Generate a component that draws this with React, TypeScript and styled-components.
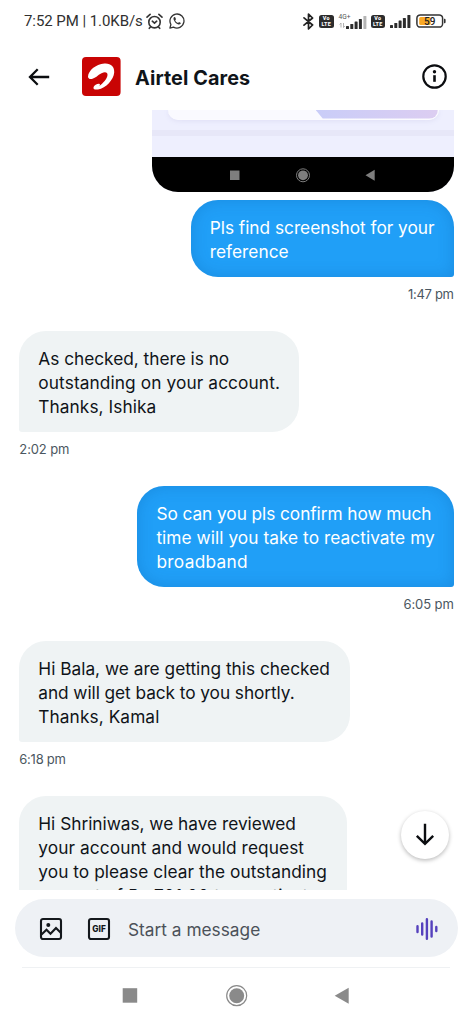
import React from 'react';
import styled, { createGlobalStyle } from 'styled-components';

const GlobalStyle = createGlobalStyle`
  *, *::before, *::after { box-sizing: border-box; }
  body { margin: 0; background: #fff; font-family: Inter, "Liberation Sans", sans-serif; color: #0f1419; }
  svg { display: block; flex: none; }
`;

const Screen = styled.div`
  width: 472px;
  height: 1024px;
  display: flex;
  flex-direction: column;
  background: #fff;
  overflow: hidden;
`;

const StatusBar = styled.div`
  height: 42px;
  flex: none;
  display: flex;
  align-items: center;
  padding: 0 26px 0 24px;
  color: #303030;
`;

const Clock = styled.span`
  font: 400 15px/20px Roboto, sans-serif;
  letter-spacing: -0.06px;
  white-space: nowrap;
  margin-right: 3px;
`;

const WhatsAppIcon = styled.svg`
  margin-left: 6px;
`;

const StatusIcons = styled.div`
  display: flex;
  align-items: center;
  gap: 5px;
  margin-left: auto;
`;

const Volte = styled.span`
  width: 14.5px;
  height: 13px;
  border-radius: 2.5px;
  background: #2c2c2c;
  color: #fff;
  font: 800 5.4px/6.4px Roboto, sans-serif;
  letter-spacing: 0.3px;
  display: flex;
  flex-direction: column;
  align-items: center;
  justify-content: center;
`;

const Network = styled.div`
  display: flex;
  align-items: flex-end;
  margin-right: -1px;
`;

const NetworkType = styled.div`
  width: 7px;
  height: 16px;
  font: 400 6.6px/8px Roboto, sans-serif;
  color: #555;
  white-space: nowrap;
`;

const Header = styled.header`
  height: 68px;
  flex: none;
  display: flex;
  align-items: center;
  padding: 1px 25px 0 28px;
`;

const Avatar = styled.div`
  margin: -1px 0 0 32px;
`;

const Title = styled.h1`
  margin: 2px auto 0 14px;
  font-size: 19.8px;
  line-height: 26px;
  font-weight: 650;
  letter-spacing: 0.1px;
`;

const Conversation = styled.main`
  position: relative;
  height: 779.7px;
  flex: none;
  overflow: hidden;
  display: flex;
  flex-direction: column;
  padding: 0 18.3px 0 19.3px;
`;

const Attachment = styled.div`
  width: 301.7px;
  height: 82px;
  flex: none;
  align-self: flex-end;
  display: flex;
  flex-direction: column;
  border-radius: 0 0 26px 26px;
  overflow: hidden;
  background: #eeeffe;
  margin-bottom: 8.2px;
`;

const AttachmentCard = styled.div`
  height: 9.5px;
  margin: 0 15px 0 16px;
  border: solid #fbfbff;
  border-width: 0 1.5px 1.5px 0;
  border-radius: 0 0 10px 10px;
  background: #fafaff;
  overflow: hidden;
  display: flex;
  justify-content: flex-end;
  box-shadow: 0 1px 5px #dfdff5;
`;

const CardAccent = styled.div`
  width: 122px;
  background: linear-gradient(90deg, #c9cdf8, #dccdf1);
  clip-path: polygon(0 0, 100% 0, 100% 100%, 7px 100%);
`;

const Stripe = styled.div`
  height: 6px;
  margin-top: 10.5px;
  background: #e7e7f8;
`;

const MiniNav = styled.div`
  height: 35.5px;
  margin-top: auto;
  background: #000;
`;

const Message = styled.div<{ $mine?: boolean }>`
  flex: none;
  display: flex;
  flex-direction: column;
  align-items: ${p => (p.$mine ? 'flex-end' : 'flex-start')};
`;

const Bubble = styled.div<{ $mine?: boolean; $width: number }>`
  width: ${p => p.$width}px;
  padding: 16px 0 12.5px 19px;
  font-size: 17.3px;
  line-height: 24px;
  white-space: nowrap;
  color: ${p => (p.$mine ? '#fff' : '#0f1419')};
  background: ${p => (p.$mine ? '#209ff7' : '#eff3f4')};
  border-radius: ${p => (p.$mine ? '27px 27px 3px 27px' : '27px 27px 27px 3px')};
  box-shadow: ${p => (p.$mine ? 'inset 0 0 16px rgba(10, 75, 145, 0.22)' : 'none')};
`;

const Line = styled.div<{ $tracking?: number }>`
  letter-spacing: ${p => p.$tracking ?? 0}px;
`;

const Time = styled.time<{ $tracking?: number }>`
  height: 54.5px;
  padding-top: 9px;
  font-size: 13px;
  line-height: 16px;
  color: #4b5761;
  letter-spacing: ${p => p.$tracking ?? 0}px;
`;

const ScrollButton = styled.button`
  position: absolute;
  right: 23px;
  bottom: 31px;
  width: 48px;
  height: 48px;
  padding: 0;
  border: 0;
  border-radius: 50%;
  background: #fff;
  box-shadow: 0 1.5px 4px rgba(0, 0, 0, 0.28);
  display: grid;
  place-items: center;
`;

const Composer = styled.div`
  height: 58px;
  flex: none;
  margin: 9.8px 14px 0 15px;
  padding: 1px 19px 0 24px;
  border-radius: 29px;
  background: #eef1f5;
  display: flex;
  align-items: center;
`;

const ComposerIcons = styled.div`
  display: flex;
  gap: 24px;
`;

const Placeholder = styled.span`
  margin: 2px auto 0 17px;
  font-size: 17.3px;
  line-height: 24px;
  color: #4b5159;
`;

const Divider = styled.div`
  height: 1px;
  flex: none;
  margin: 9.5px 22px 0;
  background: #eff1f3;
`;

const SystemNav = styled.nav`
  flex: 1;
`;

type Row = { text: string; tracking?: number };
type Entry = { mine?: boolean; width: number; rows: Row[]; time?: string; timeTracking?: number };

const messages: Entry[] = [
  {
    mine: true,
    width: 263,
    rows: [{ text: 'Pls find screenshot for your', tracking: -0.02 }, { text: 'reference', tracking: 0.03 }],
    time: '1:47 pm',
    timeTracking: -0.3,
  },
  {
    width: 280,
    rows: [
      { text: 'As checked, there is no', tracking: -0.02 },
      { text: 'outstanding on your account.', tracking: 0.1 },
      { text: 'Thanks, Ishika', tracking: 0.07 },
    ],
    time: '2:02 pm',
    timeTracking: -0.1,
  },
  {
    mine: true,
    width: 316.3,
    rows: [
      { text: 'So can you pls confirm how much', tracking: -0.07 },
      { text: 'time will you take to reactivate my', tracking: 0.05 },
      { text: 'broadband', tracking: 0.3 },
    ],
    time: '6:05 pm',
    timeTracking: -0.1,
  },
  {
    width: 330.3,
    rows: [
      { text: 'Hi Bala, we are getting this checked' },
      { text: 'and will get back to you shortly.', tracking: -0.07 },
      { text: 'Thanks, Kamal', tracking: 0.08 },
    ],
    time: '6:18 pm',
    timeTracking: -0.25,
  },
  {
    width: 327.3,
    rows: [
      { text: 'Hi Shriniwas, we have reviewed', tracking: -0.02 },
      { text: 'your account and would request', tracking: 0.08 },
      { text: 'you to please clear the outstanding', tracking: 0.05 },
      { text: 'amount of Rs 701.00 to reactivate', tracking: 0.22 },
    ],
  },
];

const Signal = ({ weak }: { weak?: boolean }) => (
  <svg width="21" height="13" viewBox="0 0 21 13" fill="#2c2c2c">
    <rect x="0" y="10" width="3" height="3" rx=".6" />
    <rect x="4.3" y="8" width="3" height="5" rx=".6" />
    <rect x="8.6" y="5.5" width="3" height="7.5" rx=".6" />
    <rect x="12.9" y="3" width="3" height="10" rx=".6" />
    <rect x="17.4" y="0" width="3" height="13" rx=".6" fill={weak ? '#b5b5b5' : '#2c2c2c'} />
  </svg>
);

export default function App() {
  return (
    <Screen>
      <GlobalStyle />
      <StatusBar>
        <Clock>7:52 PM | 1.0KB/s</Clock>
        <svg width="17" height="17" viewBox="0 0 17 17" fill="none" stroke="#333" strokeWidth="1.6" strokeLinecap="round">
          <circle cx="8.5" cy="9.2" r="5.7" />
          <path d="M1 4.1 4.1 1.4M16 4.1l-3.1-2.7M6.3 8.2l2.2 2 2.2-2M4.5 14l-1.2 1.3M12.5 14l1.2 1.3" />
        </svg>
        <WhatsAppIcon width="16" height="16" viewBox="0 0 16 16" fill="none" stroke="#333" strokeWidth="1.3">
          <path d="M.9 15.1l1-3.6A7 7 0 1 1 4.5 14.1z" strokeLinejoin="round" />
          <path
            d="M5.3 4.1c-.8.5-1 1.5-.6 2.6.8 2.2 2.5 4 4.7 4.7 1.1.35 2.3-.1 2.5-1.3l-1.9-1-.9.9C7.7 9.5 6.7 8.5 6.2 7.2l.8-.9-.8-2.1z"
            fill="#333"
            stroke="none"
          />
        </WhatsAppIcon>
        <StatusIcons>
          <svg width="11" height="17" viewBox="0 0 11 17" fill="none" stroke="#222" strokeWidth="1.7" strokeLinejoin="round" strokeLinecap="round">
            <path d="M1 4.8 9.6 12 5.5 15.9V1.1L9.6 5 1 12.2" />
          </svg>
          <Volte>
            <span>Vo</span>
            <span>LTE</span>
          </Volte>
          <Network>
            <NetworkType>
              4G+
              <svg width="7" height="7" viewBox="0 0 7 7" fill="none" stroke="#aaa" strokeWidth=".9">
                <path d="M2 6.5V2L.6 3.5M4.5 2v4.5L5.9 5" />
              </svg>
            </NetworkType>
            <Signal weak />
          </Network>
          <Volte>
            <span>Vo</span>
            <span>LTE</span>
          </Volte>
          <Signal />
          <svg width="30" height="14" viewBox="0 0 30 14">
            <rect x=".9" y=".9" width="25.7" height="12.2" rx="3.4" fill="#fff" stroke="#333" strokeWidth="1.5" />
            <path d="M28 4.8h.4a1.2 1.2 0 0 1 1.2 1.2v2a1.2 1.2 0 0 1-1.2 1.2H28z" fill="#333" />
            <rect x="3.2" y="3" width="11.5" height="8" rx="1.5" fill="#f9a825" />
            <text x="13.8" y="10.6" textAnchor="middle" fontFamily="Roboto" fontSize="10" fontWeight="500" fill="#222">59</text>
          </svg>
        </StatusIcons>
      </StatusBar>

      <Header>
        <svg width="22" height="20" viewBox="0 0 22 20" fill="none" stroke="#0b0d10" strokeWidth="2.3">
          <path d="M21.2 10H2.5M9.7 2.3 2 10l7.7 7.7" />
        </svg>
        <Avatar>
          <svg width="39" height="39" viewBox="0 0 39 39">
            <rect width="38.6" height="39" rx="4" fill="#c90404" />
            <path
              d="M6 19.5C6.3 14 13.5 7.2 22.5 6.6 29 6.2 32.6 10 32.2 15.5 31.7 22.5 24 31.2 16 32.5c-3.4.5-5.1-.6-4.4-2.6.7-2 3.3-3.3 5.5-3.2 1.2.1 1 1.2.1 2.2 3.8-2.4 8-7.2 8.3-10.9.2-2.9-2.6-3.5-6-1.7-3.7 1.9-6.5 5.2-9.6 5.7C7.4 22.4 5.9 21.2 6 19.5z"
              fill="#fff"
            />
          </svg>
        </Avatar>
        <Title>Airtel Cares</Title>
        <svg width="25" height="25" viewBox="0 0 25 25" fill="none" stroke="#0b0d10">
          <circle cx="12.5" cy="12.5" r="11.2" strokeWidth="2.2" />
          <path d="M12.5 11.2v6.6" strokeWidth="2.6" />
          <circle cx="12.5" cy="7.8" r="1.7" fill="#0b0d10" stroke="none" />
        </svg>
      </Header>

      <Conversation>
        <Attachment>
          <AttachmentCard>
            <CardAccent />
          </AttachmentCard>
          <Stripe />
          <MiniNav>
            <svg width="302" height="35" viewBox="0 0 302 35" fill="#7e7e7e">
              <rect x="78" y="13.5" width="9.5" height="9.5" />
              <circle cx="151" cy="18.3" r="4.9" />
              <circle cx="151" cy="18.3" r="6.5" fill="none" stroke="#7e7e7e" strokeWidth="1" />
              <path d="M213.5 18.3 222.7 12.8v11z" />
            </svg>
          </MiniNav>
        </Attachment>
        {messages.map(m => (
          <Message key={m.rows[0].text} $mine={m.mine}>
            <Bubble $mine={m.mine} $width={m.width}>
              {m.rows.map(r => (
                <Line key={r.text} $tracking={r.tracking}>{r.text}</Line>
              ))}
            </Bubble>
            {m.time && <Time $tracking={m.timeTracking}>{m.time}</Time>}
          </Message>
        ))}
        <ScrollButton aria-label="Scroll to latest">
          <svg width="20" height="24" viewBox="0 0 20 24" fill="none" stroke="#0b0d10" strokeWidth="2.4">
            <path d="M10 .8v20M1.8 12.8l8.2 8 8.2-8" />
          </svg>
        </ScrollButton>
      </Conversation>

      <Composer>
        <ComposerIcons>
          <svg width="24" height="24" viewBox="0 0 24 24" fill="none" stroke="#14181c" strokeWidth="2.1">
            <rect x="2" y="2" width="20" height="20" rx="2" />
            <path d="M2.5 17.5 7.5 12.8l4 4L17 11l5 5" />
            <circle cx="9.3" cy="8" r="2" fill="#14181c" stroke="none" />
          </svg>
          <svg width="24" height="24" viewBox="0 0 24 24" fill="none" stroke="#14181c" strokeWidth="2.1">
            <rect x="2" y="2" width="20" height="20" rx="2" />
            <text x="12.1" y="15.1" textAnchor="middle" fontFamily="Inter" fontSize="8.3" fontWeight="800" fill="#14181c" stroke="none">GIF</text>
          </svg>
        </ComposerIcons>
        <Placeholder>Start a message</Placeholder>
        <svg width="24" height="24" viewBox="0 0 24 24" fill="none" stroke="#5541bd" strokeWidth="2.4" strokeLinecap="round">
          <path d="M2.5 9.2v5.8M7.2 6.5v11M11.9 2.2v19.6M16.6 4.5v15M21.3 10v4" />
        </svg>
      </Composer>
      <Divider />
      <SystemNav>
        <svg width="472" height="56" viewBox="0 0 472 56" fill="#8a8a8a">
          <rect x="122.7" y="20.2" width="14.5" height="14.5" />
          <circle cx="236.7" cy="27.7" r="7.5" />
          <circle cx="236.7" cy="27.7" r="10" fill="none" stroke="#8a8a8a" strokeWidth="1.2" />
          <path d="M334.7 27.7 348.7 19.7v16z" />
        </svg>
      </SystemNav>
    </Screen>
  );
}
